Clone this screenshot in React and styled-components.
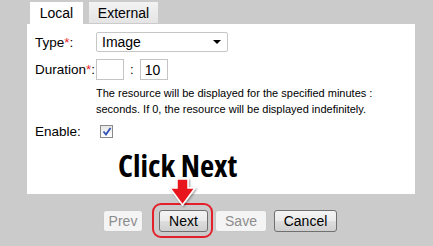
import React from 'react';
import styled, { createGlobalStyle } from 'styled-components';

const GlobalStyle = createGlobalStyle`
    html, body {
        margin: 0;
        background: #cbcbcb;
        font-family: "Liberation Sans", Arial, sans-serif;
        font-size: 13px;
        color: #000;
    }
`

const Page = styled.div`
    width: 433px;
    height: 246px;
    padding: 2px 0 0 27px;
    box-sizing: border-box;
`

const Tabs = styled.div`
    display: flex;
    gap: 6px;
    padding-left: 3px;
`

const Tab = styled.div`
    height: ${(p) => (p.active ? '22px' : '21px')};
    width: ${(p) => p.width}px;
    display: flex;
    align-items: center;
    justify-content: center;
    background: ${(p) => (p.active ? '#fff' : 'linear-gradient(#f3f3f3, #e4e4e4)')};
    font-size: 14px;
`

const Panel = styled.div`
    width: 388px;
    height: 170px;
    background: #fff;
    padding: 8px 0 0 8px;
    box-sizing: border-box;
`

const Form = styled.div`
    display: grid;
    grid-template-columns: 61px 1fr;
    align-items: center;
    row-gap: 7px;
`

const Label = styled.div`
    font-size: 13.5px;
    align-self: ${(p) => (p.top ? 'start' : 'center')};
    padding-top: ${(p) => (p.top ? '3px' : '0')};
`

const Req = styled.span`
    color: #e8262b;
`

const Select = styled.div`
    width: 132px;
    height: 20px;
    box-sizing: border-box;
    border: 1px solid #c6c6c6;
    border-radius: 2px;
    display: flex;
    align-items: center;
    justify-content: space-between;
    padding: 0 6px 0 5px;
    font-size: 14px;
`

const Caret = styled.span`
    width: 0;
    height: 0;
    border-left: 4px solid transparent;
    border-right: 4px solid transparent;
    border-top: 4px solid #000;
`

const DurationBox = styled.div`
    display: flex;
    flex-direction: column;
    gap: 5px;
`

const TimeRow = styled.div`
    display: flex;
    align-items: center;
    gap: 6px;
`

const TimeInput = styled.div`
    width: 28px;
    height: 21px;
    box-sizing: border-box;
    border: 1px solid #c4c4c4;
    display: flex;
    align-items: center;
    padding-left: 4px;
    font-size: 14px;
`

const Help = styled.div`
    font-size: 11px;
    line-height: 16px;
`

const Check = styled.span`
    width: 13px;
    height: 13px;
    box-sizing: border-box;
    margin-left: 4px;
    border: 1px solid #8a8a8a;
    background: linear-gradient(#e6e6e6, #ffffff);
    display: flex;
    align-items: center;
    justify-content: center;
`

const Callout = styled.div`
    margin: 10px 0 0 83px;
    font-family: "Open Sans", "DejaVu Sans Condensed", sans-serif;
    font-stretch: 75%;
    font-weight: 700;
    font-size: 31px;
    line-height: 32px;
`

const Buttons = styled.div`
    display: flex;
    gap: 7px;
    margin: 16px 0 0 76px;
`

const Button = styled.div`
    width: ${(p) => p.width}px;
    height: 22px;
    box-sizing: border-box;
    border-radius: 3px;
    display: flex;
    align-items: center;
    justify-content: center;
    font-size: 14px;
    border: 1px solid ${(p) => (p.disabled ? '#c8c8c8' : '#707070')};
    color: ${(p) => (p.disabled ? '#8d8d8d' : '#000')};
    background: ${(p) => (p.disabled ? '#f4f4f4' : 'linear-gradient(#f4f4f4 0%, #ebebeb 50%, #dddddd 51%, #cfcfcf 100%)')};
    margin-right: ${(p) => (p.spaced ? '9px' : '0')};
`

const Highlight = styled.div`
    position: relative;
    &::after {
        content: '';
        position: absolute;
        top: -7px;
        left: -7px;
        right: -5px;
        bottom: -6px;
        border: 2px solid #e3202a;
        border-radius: 9px;
    }
`

const Arrow = styled.svg`
    position: absolute;
    left: 9px;
    top: -33px;
    overflow: visible;
    z-index: 1;
`

const App = () => {
    return (
        <Page>
            <GlobalStyle />
            <Tabs>
                <Tab active width={53}>Local</Tab>
                <Tab width={69}>External</Tab>
            </Tabs>
            <Panel>
                <Form>
                    <Label>Type<Req>*</Req>:</Label>
                    <Select>
                        Image
                        <Caret />
                    </Select>
                    <Label top>Duration<Req>*</Req>:</Label>
                    <DurationBox>
                        <TimeRow>
                            <TimeInput />
                            :
                            <TimeInput>10</TimeInput>
                        </TimeRow>
                        <Help>
                            The resource will be displayed for the specified minutes :
                            <br />
                            seconds. If 0, the resource will be displayed indefinitely.
                        </Help>
                    </DurationBox>
                    <Label>Enable:</Label>
                    <Check>
                        <svg width="10" height="9" viewBox="0 0 10 9">
                            <path d="M1.5 4.5 L4 7.5 L8.5 1" fill="none" stroke="#2f52b4" strokeWidth="1.8" />
                        </svg>
                    </Check>
                </Form>
                <Callout>Click Next</Callout>
            </Panel>
            <Buttons>
                <Button disabled width={40} spaced>Prev</Button>
                <Highlight>
                    <Arrow width="30" height="30" viewBox="0 0 30 30">
                        <defs>
                            <filter id="shadow" x="-30%" y="-30%" width="160%" height="160%">
                                <feDropShadow dx="1" dy="1" stdDeviation="1" floodColor="#000" floodOpacity="0.4" />
                            </filter>
                        </defs>
                        <path
                            d="M9 2 H20 V11 H27 L14.5 28 L2 11 H9 Z"
                            fill="#e8181e"
                            stroke="#fff"
                            strokeWidth="1.5"
                            filter="url(#shadow)"
                        />
                    </Arrow>
                    <Button width={49}>Next</Button>
                </Highlight>
                <Button disabled width={52}>Save</Button>
                <Button width={63}>Cancel</Button>
            </Buttons>
        </Page>
    );
};

export default App;
